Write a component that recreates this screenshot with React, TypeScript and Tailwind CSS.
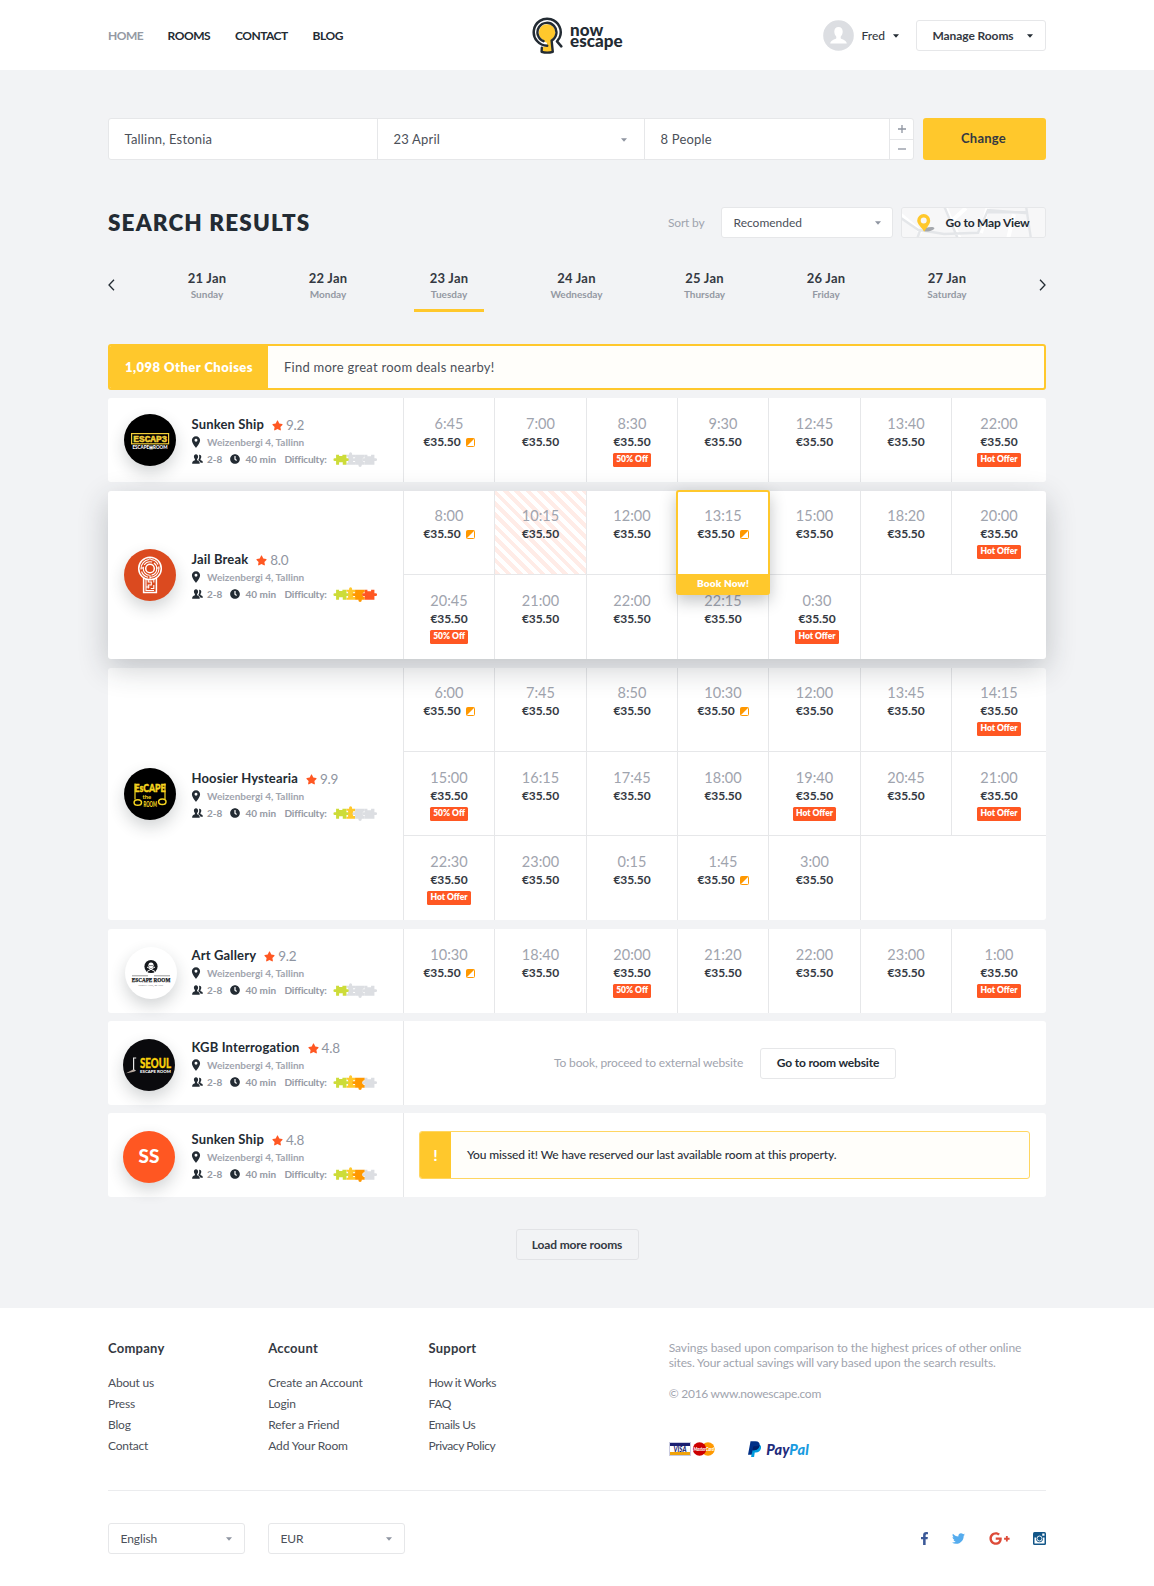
import type { ReactNode } from "react";
import { FaClock, FaFacebookF, FaGooglePlusG, FaStar, FaTwitter } from "react-icons/fa";
import { MdLocationOn } from "react-icons/md";

type Slot = {
  time: string;
  flag?: boolean;
  badge?: string;
  taken?: boolean;
  active?: boolean;
  shift?: boolean;
};

type Room = {
  name: string;
  rating: string;
  level: number;
  logo: ReactNode;
  logoClass: string;
  cardClass: string;
  rows?: Slot[][];
  panel?: ReactNode;
};

function Caret({ className = "" }: { className?: string }) {
  return (
    <svg viewBox="0 0 6 4" className={`h-[4px] w-[6px] shrink-0 ${className}`}>
      <path d="M0 0.300h6L3 3.800z" fill="currentColor" />
    </svg>
  );
}

function BrandMark() {
  return (
    <svg viewBox="0 0 31 37" className="-mt-px h-[37px] w-[31px]" fill="none" strokeLinecap="round" strokeLinejoin="round">
      <path d="M15 7.200a8.300 8.300 0 0 1 4.200 15.400l1.400 12.200c-3.600 1-7.400 1-11 0l.3-4.600 5.300-1.200-.3-3.200a8.900 8.900 0 0 1-4.300-3.400A8.300 8.300 0 0 1 15 7.200z" fill="#ffc82c" />
      <path d="M11.600 24.200A9.500 9.500 0 1 1 19.600 23.600l1.200 11.200c-3.600 1.100-7.600 1.100-11.200 0l.2-4" stroke="#232b33" strokeWidth="2.400" />
      <path d="M15.200 28.700A13.500 13.500 0 1 1 27.600 20.600L25 24.400l4.300 5" stroke="#232b33" strokeWidth="2.500" />
    </svg>
  );
}

function Avatar() {
  return (
    <svg viewBox="0 0 31 31" className="size-[31px]">
      <circle cx="15.500" cy="15.500" r="15.300" fill="#dcdee2" />
      <path d="M15.500 7c2.700 0 4.200 2 4.200 4.600 0 2-.8 4-2 5.100v1.500c0 .9 5.800 1.600 6.100 5.300H7.200c.3-3.700 6.100-4.400 6.100-5.300v-1.500c-1.200-1.100-2-3.100-2-5.100C11.300 9 12.800 7 15.500 7z" fill="#fff" />
    </svg>
  );
}

function PeopleIcon() {
  return (
    <svg viewBox="0 0 22 20" className="h-[10px] w-[11px]" fill="#232b33">
      <path d="M8 .5c2.600 0 4.200 1.900 4.200 4.700 0 2-.8 3.900-2 5v2c0 1.300 4.600 1.700 5 4.400l.3 2.900H.3l.3-2.900c.4-2.700 5.200-3.100 5.200-4.400v-2c-1.200-1.100-2-3-2-5C3.800 2.400 5.400.5 8 .5z" />
      <path d="M14 1.500c2.700-.4 4.600 1.300 4.600 4 0 1.700-.7 3.300-1.700 4.300v1.800c0 1.300 4.200 1.600 4.600 4l.2 1.900h-4.500c-.7-2.900-3-3.800-4.300-4.600v-2c1-1.300 1.600-3.200 1.600-5.100 0-1.700-.2-3-.5-4.300z" />
    </svg>
  );
}

function Puzzle({ level }: { level: number }) {
  const colors = ["#cddc39", "#ffc82c", "#ff9800", "#ff5722"];
  const c = colors.map((color, i) => (i < level ? color : "#dcdee2"));
  return (
    <svg viewBox="0 0 133 45" className="h-[15px] w-[44.500px]">
      <path d="M40 32h5V14h-5V8h8V5a4.500 4.500 0 0 1 9 0v3h9v8h-6v14h6v8H40z" fill={c[1]} />
      <path d="M66 8h29v8a7 7 0 0 0 0 14v8h-9v2a5 5 0 0 1-10 0v-2H66V27h-4a4 4 0 0 1 0-8h4z" fill={c[2]} />
      <path d="M95 8h8v5h11V8h10v11h4a4 4 0 0 1 0 8h-4v11H95V27h-4a4 4 0 0 1 0-8h4z" fill={c[3]} />
      <path d="M9 8h9v4h10V8h12v11h3a4 4 0 0 1 0 8h-3v11H29v-7H18v7H9V27H5a4 4 0 0 1 0-8h4z" fill={c[0]} />
    </svg>
  );
}

function FlagIcon() {
  return (
    <svg viewBox="0 0 18 18" className="size-[9px] shrink-0">
      <rect x="1" y="1" width="16" height="16" rx="2" fill="#fff" stroke="#ff9800" strokeWidth="2" />
      <path d="M1 17V3a2 2 0 0 1 2-2h14z" fill="#ff9800" />
    </svg>
  );
}

function EscapeLogo() {
  return (
    <svg viewBox="0 0 52 52" className="size-full">
      <rect x="7.600" y="19.600" width="37" height="10.200" fill="#000" stroke="#f2cf3a" strokeWidth="1.200" />
      <text x="9.300" y="28" textLength="34" lengthAdjust="spacingAndGlyphs" fontFamily="Liberation Mono" fontWeight="700" fontSize="9.500" fill="#f2cf3a" stroke="#f2cf3a" strokeWidth=".5">ESCAP3</text>
      <text x="8.500" y="34.700" textLength="35" lengthAdjust="spacingAndGlyphs" fontFamily="Lato" fontWeight="900" fontSize="4.600" fill="#fff">ESCAPE⊞ROOM</text>
    </svg>
  );
}

function JailLogo() {
  return (
    <svg viewBox="0 0 52 52" className="size-full" fill="none" stroke="#fff">
      <path d="M19.600 28.500v15h12.800v-15" fill="#db4a1f" strokeWidth="1.500" />
      <circle cx="26" cy="19.500" r="11.300" fill="#db4a1f" strokeWidth="1.500" />
      <circle cx="26" cy="19.500" r="9" strokeWidth="1.100" strokeDasharray="14 2 9 2" />
      <circle cx="26" cy="19.500" r="6.800" strokeWidth="1.100" strokeDasharray="9 2 12 2" />
      <circle cx="26" cy="19.500" r="4.300" strokeWidth="1.500" />
      <path d="M22 30v11.500h8M24.300 30v3h3v3h-3v3.500M29.800 30v3.500M29.800 36v3.500h-3M22.500 38h3" strokeWidth="1.100" />
      <path d="M26 8v3M17 19h3M32 19h3M26 26v4" strokeWidth="1" />
    </svg>
  );
}

function HoosierLogo() {
  return (
    <svg viewBox="0 0 52 52" className="size-full" fill="#f6d51f">
      <text x="10.500" y="24" textLength="31" lengthAdjust="spacingAndGlyphs" fontFamily="Lato" fontWeight="900" fontSize="12" stroke="#f6d51f" strokeWidth=".5">EsCAPE</text>
      <text x="18.500" y="31" fontFamily="Lato" fontWeight="700" fontSize="6">the</text>
      <text x="19.500" y="38.500" textLength="13.500" lengthAdjust="spacingAndGlyphs" fontFamily="Lato" fontWeight="900" fontSize="8">ROOM</text>
      <path d="M11 15.500v16M41 15.500v16" stroke="#f6d51f" strokeWidth="1.200" />
      <ellipse cx="13.800" cy="34.500" rx="3.700" ry="2.800" fill="none" stroke="#f6d51f" strokeWidth="1.500" />
      <ellipse cx="38.300" cy="33.800" rx="3.700" ry="2.800" fill="none" stroke="#f6d51f" strokeWidth="1.500" />
    </svg>
  );
}

function GalleryLogo() {
  return (
    <svg viewBox="0 0 52 52" className="size-full">
      <circle cx="26" cy="19.500" r="6.600" fill="#15181c" />
      <path d="M22 20l8 4.500M30 20l-8 4.500" stroke="#fff" strokeWidth="1" />
      <ellipse cx="26" cy="18.300" rx="2.600" ry="2.900" fill="#fff" />
      <circle cx="25" cy="18.600" r=".7" fill="#15181c" />
      <circle cx="27" cy="18.600" r=".7" fill="#15181c" />
      <path d="M7 28.800h16M29 28.800h16" stroke="#555" strokeWidth=".6" />
      <text x="6.800" y="35" textLength="38.500" lengthAdjust="spacingAndGlyphs" fontFamily="Liberation Serif" fontWeight="700" fontSize="5.800" fill="#15181c" stroke="#15181c" strokeWidth=".25">ESCAPE ROOM</text>
      <text x="13.500" y="38.800" textLength="25" lengthAdjust="spacingAndGlyphs" fontFamily="Liberation Serif" fontSize="2.800" fill="#444">PORTLAND, MAINE</text>
    </svg>
  );
}

function SeoulLogo() {
  return (
    <svg viewBox="0 0 52 52" className="size-full overflow-visible">
      <path d="M10 18.500h3.200v1h-2v11l2 1.200-3.200.3z" fill="#e8e8e8" />
      <path d="M10 30.500l2.500 1.500c-2 1-5 1.800-9.500 2.300z" fill="#b9aaa0" />
      <text x="17" y="28.900" textLength="31" lengthAdjust="spacingAndGlyphs" fontFamily="Lato" fontWeight="900" fontSize="14" fill="#fbd20b" stroke="#fbd20b" strokeWidth=".4">SEOUL</text>
      <text x="17" y="33.600" textLength="31" lengthAdjust="spacingAndGlyphs" fontFamily="Lato" fontWeight="900" fontSize="4.400" fill="#fff">ESCAPE ROOM</text>
    </svg>
  );
}

function MapTexture() {
  return (
    <svg viewBox="0 0 143 28" preserveAspectRatio="none" className="absolute inset-0 size-full" fill="none">
      <rect width="143" height="28" fill="#f7f7f8" />
      <path d="M-2 6l22 18M43-2l7 16 8 16M86-2l-7 26M106 30l6-24M64 0l-16 14" stroke="#fff" strokeWidth="4" />
      <path d="M-2 9l18 12 26 4 34-1 10-22 40 3M42-2l14 32M124-2l5 32M18 22l-3 8M84 4h42" stroke="#e4e6e9" strokeWidth="2.400" />
    </svg>
  );
}

function MapPin() {
  return (
    <svg viewBox="0 0 18 18" className="h-[18px] w-[18px]">
      <ellipse cx="12" cy="15.200" rx="5.500" ry="2" fill="#a5a8ad" transform="rotate(-12 12 15.200)" />
      <path fillRule="evenodd" d="M6.700 0a6.500 6.500 0 0 1 6.500 6.500c0 4-3.400 6.500-6 11.300C5 13.500.2 10.500.2 6.500A6.500 6.500 0 0 1 6.700 0zm0 3.600a3 3 0 1 0 0 6 3 3 0 0 0 0-6z" fill="#ffc82c" />
    </svg>
  );
}

function SlotText({ slot }: { slot: Slot }) {
  return (
    <>
      <div className="text-[14.500px] leading-[18px] text-[#9fa4ae]">{slot.time}</div>
      <div className="flex items-center gap-[5px] text-[12px] leading-[18px] font-bold tracking-[-0.1px] text-[#343942]">
        €35.50
        {slot.flag && <FlagIcon />}
      </div>
      {slot.badge && (
        <div className="mt-[2px] rounded-[1.500px] bg-[#ff5722] px-[3px] text-[8.500px] leading-[13.500px] font-extrabold text-white">
          {slot.badge}
        </div>
      )}
    </>
  );
}

function Cell({ slot, first, divided }: { slot: Slot; first: boolean; divided: boolean }) {
  return (
    <div
      className={`relative flex flex-col items-center border-l border-[#e6e7e9] ${first ? "pt-[16px]" : "pt-[17px]"} ${divided ? "border-b" : ""} ${slot.shift ? "pl-[5px]" : ""} ${
        slot.taken ? "bg-[repeating-linear-gradient(45deg,#ffece7_0_4px,#fff_4px_8px)]" : ""
      }`}
    >
      {slot.active ? (
        <div className="absolute -top-px -left-[2px] z-20 flex h-[105px] w-[94px] flex-col rounded-[3px] border-2 border-[#ffc82c] bg-white shadow-[0_6px_16px_rgba(35,43,51,0.28)]">
          <div className="flex flex-1 flex-col items-center pt-[15px]">
            <SlotText slot={slot} />
          </div>
          <div className="flex h-[19px] items-center justify-center bg-[#ffc82c] text-[10px] font-extrabold tracking-[0.16px] text-white">
            Book Now!
          </div>
        </div>
      ) : (
        <SlotText slot={slot} />
      )}
    </div>
  );
}

function RoomInfo({ room }: { room: Room }) {
  return (
    <div className="flex w-[295px] shrink-0 items-center">
      <div className={`size-[52px] shrink-0 rounded-full shadow-[0_7px_16px_rgba(35,43,51,0.2)] ${room.logoClass}`}>
        {room.logo}
      </div>
      <div className="ml-[15.500px] flex w-[200px] flex-col pt-[4px]">
        <div className="flex h-[17px] items-center">
          <span className="text-[13px] font-bold tracking-[0.15px] text-[#232b33]">{room.name}</span>
          <FaStar className="ml-[8px] size-[11px] text-[#ff5722]" />
          <span className="ml-[3px] text-[13.500px] tracking-[-0.25px] text-[#8f95a1]">{room.rating}</span>
        </div>
        <div className="flex h-[17px] items-center">
          <MdLocationOn className="-ml-[2.500px] size-[14px] text-[#232b33]" />
          <span className="ml-[4px] text-[10px] font-bold text-[#9fa4ae]">Weizenbergi 4, Tallinn</span>
        </div>
        <div className="flex h-[17px] items-center text-[10px] font-bold text-[#9499a3]">
          <PeopleIcon />
          <span className="ml-[4.500px] w-[23px]">2-8</span>
          <FaClock className="size-[10px] text-[#232b33]" />
          <span className="ml-[5.500px] w-[39px]">40 min</span>
          <span className="w-[48px] tracking-[-0.2px]">Difficulty:</span>
          <Puzzle level={room.level} />
        </div>
      </div>
    </div>
  );
}

function RoomCard({ room }: { room: Room }) {
  const rows = room.rows;
  return (
    <article className={`flex rounded-[3px] bg-white ${room.cardClass}`}>
      <RoomInfo room={room} />
      {rows ? (
        <div className="flex flex-1 flex-col">
          {rows.map((row, r) => (
            <div key={r} className="grid flex-1 grid-cols-[91px_92px_91px_91px_92px_91px_95px]">
              {row.map((slot) => (
                <Cell key={slot.time} slot={slot} first={r === 0 && rows.length > 1} divided={r < rows.length - 1} />
              ))}
              {row.length < 7 && <div className="col-span-2 border-l border-[#e6e7e9]" />}
            </div>
          ))}
        </div>
      ) : (
        <div className="flex flex-1 items-center border-l border-[#e6e7e9]">{room.panel}</div>
      )}
    </article>
  );
}

const rooms: Room[] = [
  {
    name: "Sunken Ship",
    rating: "9.2",
    level: 1,
    logo: <EscapeLogo />,
    logoClass: "ml-[16px] bg-black",
    cardClass: "mt-[8px] h-[84px]",
    rows: [
      [
        { time: "6:45", flag: true },
        { time: "7:00" },
        { time: "8:30", badge: "50% Off" },
        { time: "9:30" },
        { time: "12:45" },
        { time: "13:40" },
        { time: "22:00", badge: "Hot Offer" },
      ],
    ],
  },
  {
    name: "Jail Break",
    rating: "8.0",
    level: 4,
    logo: <JailLogo />,
    logoClass: "ml-[16px] bg-[#db4a1f]",
    cardClass: "relative z-10 mt-[9px] h-[168px] shadow-[0_9px_30px_rgba(35,43,51,0.24)]",
    rows: [
      [
        { time: "8:00", flag: true },
        { time: "10:15", taken: true },
        { time: "12:00" },
        { time: "13:15", flag: true, active: true },
        { time: "15:00" },
        { time: "18:20" },
        { time: "20:00", badge: "Hot Offer" },
      ],
      [
        { time: "20:45", badge: "50% Off" },
        { time: "21:00" },
        { time: "22:00" },
        { time: "22:15" },
        { time: "0:30", badge: "Hot Offer", shift: true },
      ],
    ],
  },
  {
    name: "Hoosier Hystearia",
    rating: "9.9",
    level: 2,
    logo: <HoosierLogo />,
    logoClass: "ml-[16px] bg-black",
    cardClass: "mt-[9px] h-[252px]",
    rows: [
      [
        { time: "6:00", flag: true },
        { time: "7:45" },
        { time: "8:50" },
        { time: "10:30", flag: true },
        { time: "12:00" },
        { time: "13:45" },
        { time: "14:15", badge: "Hot Offer" },
      ],
      [
        { time: "15:00", badge: "50% Off" },
        { time: "16:15" },
        { time: "17:45" },
        { time: "18:00" },
        { time: "19:40", badge: "Hot Offer" },
        { time: "20:45" },
        { time: "21:00", badge: "Hot Offer" },
      ],
      [
        { time: "22:30", badge: "Hot Offer" },
        { time: "23:00" },
        { time: "0:15" },
        { time: "1:45", flag: true },
        { time: "3:00" },
      ],
    ],
  },
  {
    name: "Art Gallery",
    rating: "9.2",
    level: 1,
    logo: <GalleryLogo />,
    logoClass: "ml-[17px] -mr-px mt-[3px] bg-white",
    cardClass: "mt-[9px] h-[84px]",
    rows: [
      [
        { time: "10:30", flag: true },
        { time: "18:40" },
        { time: "20:00", badge: "50% Off" },
        { time: "21:20" },
        { time: "22:00" },
        { time: "23:00" },
        { time: "1:00", badge: "Hot Offer" },
      ],
    ],
  },
  {
    name: "KGB Interrogation",
    rating: "4.8",
    level: 3,
    logo: <SeoulLogo />,
    logoClass: "ml-[15px] mr-px mt-[3px] bg-[#0a0a0d]",
    cardClass: "mt-[8px] h-[84px]",
    panel: (
      <div className="flex items-center pl-[150px]">
        <span className="w-[206px] text-[12px] tracking-[-0.14px] text-[#9fa4ae]">To book, proceed to external website</span>
        <button className="h-[31px] w-[136px] rounded-[3px] border border-[#e6e7e9] text-[12px] font-bold tracking-[-0.17px] text-[#232b33]">
          Go to room website
        </button>
      </div>
    ),
  },
  {
    name: "Sunken Ship",
    rating: "4.8",
    level: 3,
    logo: <span className="flex size-full items-center justify-center text-[19px] font-black text-white">SS</span>,
    logoClass: "ml-[15px] mr-px mt-[3px] bg-[#ff5722]",
    cardClass: "mt-[8px] h-[84px]",
    panel: (
      <div className="mr-[16px] ml-[15px] flex h-[48px] flex-1 overflow-hidden rounded-[3px] border border-[#ffd661] bg-[#fffefa]">
        <div className="flex w-[31px] items-center justify-center bg-[#ffc82c] text-[16px] font-bold text-white">!</div>
        <div className="flex items-center pl-[16px] text-[12px] font-medium tracking-[-0.13px] text-[#2b3039]">
          You missed it! We have reserved our last available room at this property.
        </div>
      </div>
    ),
  },
];

const days = [
  ["21 Jan", "Sunday"],
  ["22 Jan", "Monday"],
  ["23 Jan", "Tuesday"],
  ["24 Jan", "Wednesday"],
  ["25 Jan", "Thursday"],
  ["26 Jan", "Friday"],
  ["27 Jan", "Saturday"],
];

const footerColumns = [
  { title: "Company", links: ["About us", "Press", "Blog", "Contact"], tracking: "tracking-[-0.2px]" },
  { title: "Account", links: ["Create an Account", "Login", "Refer a Friend", "Add Your Room"], tracking: "tracking-[-0.15px]" },
  { title: "Support", links: ["How it Works", "FAQ", "Emails Us", "Privacy Policy"], tracking: "tracking-[-0.4px]" },
];

function Header() {
  return (
    <header className="h-[70px] bg-white px-[108px]">
      <div className="flex h-[71px] items-center">
        <nav className="flex w-[424px] text-[12px] font-bold text-[#232b33]">
          <a className="w-[59.500px] tracking-[-0.5px] text-[#9499a3]">HOME</a>
          <a className="w-[67.500px] tracking-[-0.45px]">ROOMS</a>
          <a className="w-[77.500px] tracking-[-0.5px]">CONTACT</a>
          <a className="tracking-[-0.4px]">BLOG</a>
        </nav>
        <div className="flex items-center">
          <BrandMark />
          <div className="ml-[7px] flex flex-col pb-[2px] text-[17px] leading-[11px] font-black tracking-[0.05px] text-[#232b33]">
            <span>now</span>
            <span>escape</span>
          </div>
        </div>
        <div className="ml-auto flex items-center">
          <Avatar />
          <span className="ml-[7.500px] text-[12px] font-medium text-[#343942]">Fred</span>
          <Caret className="ml-[8px] text-[#232b33]" />
          <button className="ml-[17px] flex h-[31px] w-[130px] items-center justify-between rounded-[3px] border border-[#e6e7e9] pr-[12px] pl-[15.500px] text-[12px] font-bold tracking-[-0.09px] text-[#343942]">
            Manage Rooms
            <Caret className="text-[#232b33]" />
          </button>
        </div>
      </div>
    </header>
  );
}

function SearchBar() {
  return (
    <form className="flex h-[42px]">
      <div className="flex w-[806px] rounded-[3px] border border-[#e6e7e9] bg-white text-[13px] tracking-[0.2px] text-[#4b5059]">
        <div className="flex w-[268px] items-center pt-[2px] pl-[15.500px]">Tallinn, Estonia</div>
        <div className="flex w-[267px] items-center justify-between border-l border-[#e6e7e9] pt-[2px] pr-[17px] pl-[15.500px]">
          23 April
          <Caret className="text-[#8f95a1]" />
        </div>
        <div className="flex flex-1 items-center border-l border-[#e6e7e9] pt-[2px] pl-[15.500px]">8 People</div>
        <div className="flex w-[24px] flex-col border-l border-[#e6e7e9] text-[#8f95a1]">
          <div className="flex flex-1 items-center justify-center border-b border-[#e6e7e9]">
            <svg viewBox="0 0 8 8" className="size-[8px]">
              <path d="M4 0v8M0 4h8" stroke="currentColor" strokeWidth="1.300" />
            </svg>
          </div>
          <div className="flex flex-1 items-center justify-center">
            <svg viewBox="0 0 8 8" className="size-[8px]">
              <path d="M0 4h8" stroke="currentColor" strokeWidth="1.300" />
            </svg>
          </div>
        </div>
      </div>
      <button type="button" className="ml-[9px] flex-1 rounded-[3px] bg-[#ffc82c] pr-[2px] text-[13px] font-bold tracking-[0.24px] text-[#343942]">
        Change
      </button>
    </form>
  );
}

function ResultsHeader() {
  return (
    <div className="mt-[47px] flex h-[31px] items-center">
      <h1 className="mt-[1px] text-[22.500px] font-extrabold tracking-[1.150px] text-[#232b33]">SEARCH RESULTS</h1>
      <div className="ml-auto flex items-center">
        <span className="w-[53px] text-[12px] tracking-[-0.2px] text-[#9fa4ae]">Sort by</span>
        <div className="flex h-[31px] w-[172px] items-center justify-between rounded-[3px] border border-[#e6e7e9] bg-white pr-[11px] pl-[11.500px] text-[12px] text-[#4b5059]">
          Recomended
          <Caret className="text-[#8f95a1]" />
        </div>
        <button className="relative ml-[8px] flex h-[31px] w-[145px] items-center overflow-hidden rounded-[3px] border border-[#e6e7e9] pl-[14.500px] text-[12px] font-bold tracking-[-0.18px] text-[#232b33]">
          <MapTexture />
          <span className="relative flex items-center gap-[11px]">
            <MapPin />
            Go to Map View
          </span>
        </button>
      </div>
    </div>
  );
}

function DayPicker() {
  return (
    <div className="mt-[32px] flex h-[43px] justify-between">
      <svg viewBox="0 0 7 12" className="mt-[9px] h-[12px] w-[7px]" fill="none">
        <path d="M6 .8L1 6l5 5.200" stroke="#232b33" strokeWidth="1.300" />
      </svg>
      <div className="ml-[6px] grid grid-cols-[121px_121px_121px_134px_122px_121px_121px]">
        {days.map(([date, name]) => (
          <div key={name} className="flex flex-col items-center">
            <div className={`flex h-[42px] flex-col items-center ${name === "Tuesday" ? "w-[70px] border-b-[3px] border-[#ffc82c]" : ""}`}>
              <span className="text-[13px] leading-[17px] font-bold tracking-[0.25px] text-[#343942]">{date}</span>
              <span className="text-[10px] leading-[15px] font-bold text-[#9499a3]">{name}</span>
            </div>
          </div>
        ))}
      </div>
      <svg viewBox="0 0 7 12" className="mt-[9px] ml-[6px] h-[12px] w-[7px]" fill="none">
        <path d="M1 .8L6 6l-5 5.200" stroke="#232b33" strokeWidth="1.300" />
      </svg>
    </div>
  );
}

function PaymentMarks() {
  return (
    <div className="mt-[39px] flex h-[17px] items-center">
      <svg viewBox="0 0 46 14" className="h-[14px] w-[46px] overflow-visible">
        <rect x=".5" y=".5" width="21" height="13" fill="#fff" stroke="#c9cbe0" />
        <rect x="1" y="1" width="20" height="3" fill="#1a1f71" />
        <rect x="1" y="10" width="20" height="3" fill="#f0a30a" />
        <text x="4.500" y="9.600" textLength="13" lengthAdjust="spacingAndGlyphs" fontFamily="Lato" fontWeight="900" fontStyle="italic" fontSize="6.500" fill="#1a1f71">VISA</text>
        <circle cx="39" cy="7" r="6.700" fill="#ff9900" />
        <circle cx="30.500" cy="7" r="6.700" fill="#cc0000" />
        <text x="24.500" y="8.800" textLength="20.500" lengthAdjust="spacingAndGlyphs" fontFamily="Lato" fontWeight="900" fontStyle="italic" fontSize="4.600" fill="#fff">MasterCard</text>
      </svg>
      <svg viewBox="0 0 24 28" className="ml-[33px] h-[16px] w-[13.500px]">
        <path d="M9 5h9c4 1 6 4 5 8-1 5-5 7-9 7h-2l-1.200 8H5.500z" fill="#009cde" />
        <path d="M4.500 0H13c6 0 8.500 3 7.500 8s-5 8-10 8H8L6.500 24H0z" fill="#003087" />
        <path d="M20.400 6.500c.3 5-3.400 9.500-9.900 9.500H8.200L7 22.500 9 11c.2-1.500 1-2 2.500-2h5c2-.3 3.300-1.300 3.900-2.500z" fill="#012169" />
      </svg>
      <span className="ml-[5px] text-[14.500px] leading-[17px] font-black tracking-[0.1px] text-[#1f2c7c] italic">
        Pay<span className="text-[#1a9be0]">Pal</span>
      </span>
    </div>
  );
}

function FooterSelect({ label }: { label: string }) {
  return (
    <div className="flex h-[31px] w-[136.500px] items-center justify-between rounded-[3px] border border-[#e6e7e9] pr-[11.500px] pl-[11.500px] text-[12px] tracking-[-0.1px] text-[#4b5059]">
      {label}
      <Caret className="text-[#8f95a1]" />
    </div>
  );
}

function Footer() {
  return (
    <footer className="h-[278px] bg-white px-[108px] pt-[31px]">
      <div className="flex h-[152px] border-b border-[#ebecee]">
        {footerColumns.map((col) => (
          <div key={col.title} className="w-[160.250px]">
            <h2 className="-mt-px text-[13px] leading-[20px] font-bold tracking-[0.24px] text-[#343942]">{col.title}</h2>
            <ul className={`mt-[14px] text-[12px] leading-[21px] text-[#4b5059] ${col.tracking}`}>
              {col.links.map((link) => (
                <li key={link}>{link}</li>
              ))}
            </ul>
          </div>
        ))}
        <div className="ml-[80px] w-[377px]">
          <p className="pt-[1px] text-[12px] leading-[15.400px] tracking-[-0.08px] text-[#9fa4ae]">
            Savings based upon comparison to the highest prices of other online
            <br />
            <span className="tracking-[-0.15px]">sites. Your actual savings will vary based upon the search results.</span>
            <br />
            <br />
            <span className="tracking-[-0.27px]">© 2016 www.nowescape.com</span>
          </p>
          <PaymentMarks />
        </div>
      </div>
      <div className="mt-[32px] flex items-center">
        <FooterSelect label="English" />
        <div className="ml-[23.500px]">
          <FooterSelect label="EUR" />
        </div>
        <div className="ml-auto flex items-center">
          <FaFacebookF className="h-[13px] w-[9px] text-[#3b5998]" />
          <FaTwitter className="ml-[23px] size-[13px] text-[#55acee]" />
          <FaGooglePlusG className="ml-[24px] size-[21px] text-[#dd4b39]" />
          <svg viewBox="0 0 26 26" className="ml-[23px] size-[13px]">
            <rect width="26" height="26" rx="3" fill="#125688" />
            <rect x="18.500" y="3" width="4.500" height="4.500" fill="#fff" />
            <path d="M3 11h3.200a7.200 7.200 0 1 0 13.600 0H23v12H3z" fill="#fff" />
            <circle cx="13" cy="13" r="5" fill="none" stroke="#fff" strokeWidth="1.800" />
          </svg>
        </div>
      </div>
    </footer>
  );
}

export default function App() {
  return (
    <div className="w-[1154px] bg-[#f2f3f5] font-['Lato',sans-serif]">
      <Header />
      <main className="flex h-[1238px] flex-col px-[108px] pt-[48px]">
        <SearchBar />
        <ResultsHeader />
        <DayPicker />
        <section className="mt-[31px]">
          <div className="flex h-[46px] overflow-hidden rounded-[3px] border-2 border-[#ffc82c] bg-[#fffefa]">
            <div className="flex w-[158px] items-center bg-[#ffc82c] pt-[2px] pl-[15px] text-[13px] font-extrabold tracking-[0.45px] text-white">
              1,098 Other Choises
            </div>
            <div className="flex items-center pt-[2px] pl-[16px] text-[13px] tracking-[0.25px] text-[#4b5059]">
              Find more great room deals nearby!
            </div>
          </div>
          {rooms.map((room, i) => (
            <RoomCard key={i} room={room} />
          ))}
        </section>
        <button className="mt-[32px] h-[31px] w-[123px] self-center rounded-[3px] border border-[#e2e3e6] text-[12px] font-bold tracking-[-0.14px] text-[#343942]">
          Load more rooms
        </button>
      </main>
      <Footer />
    </div>
  );
}
